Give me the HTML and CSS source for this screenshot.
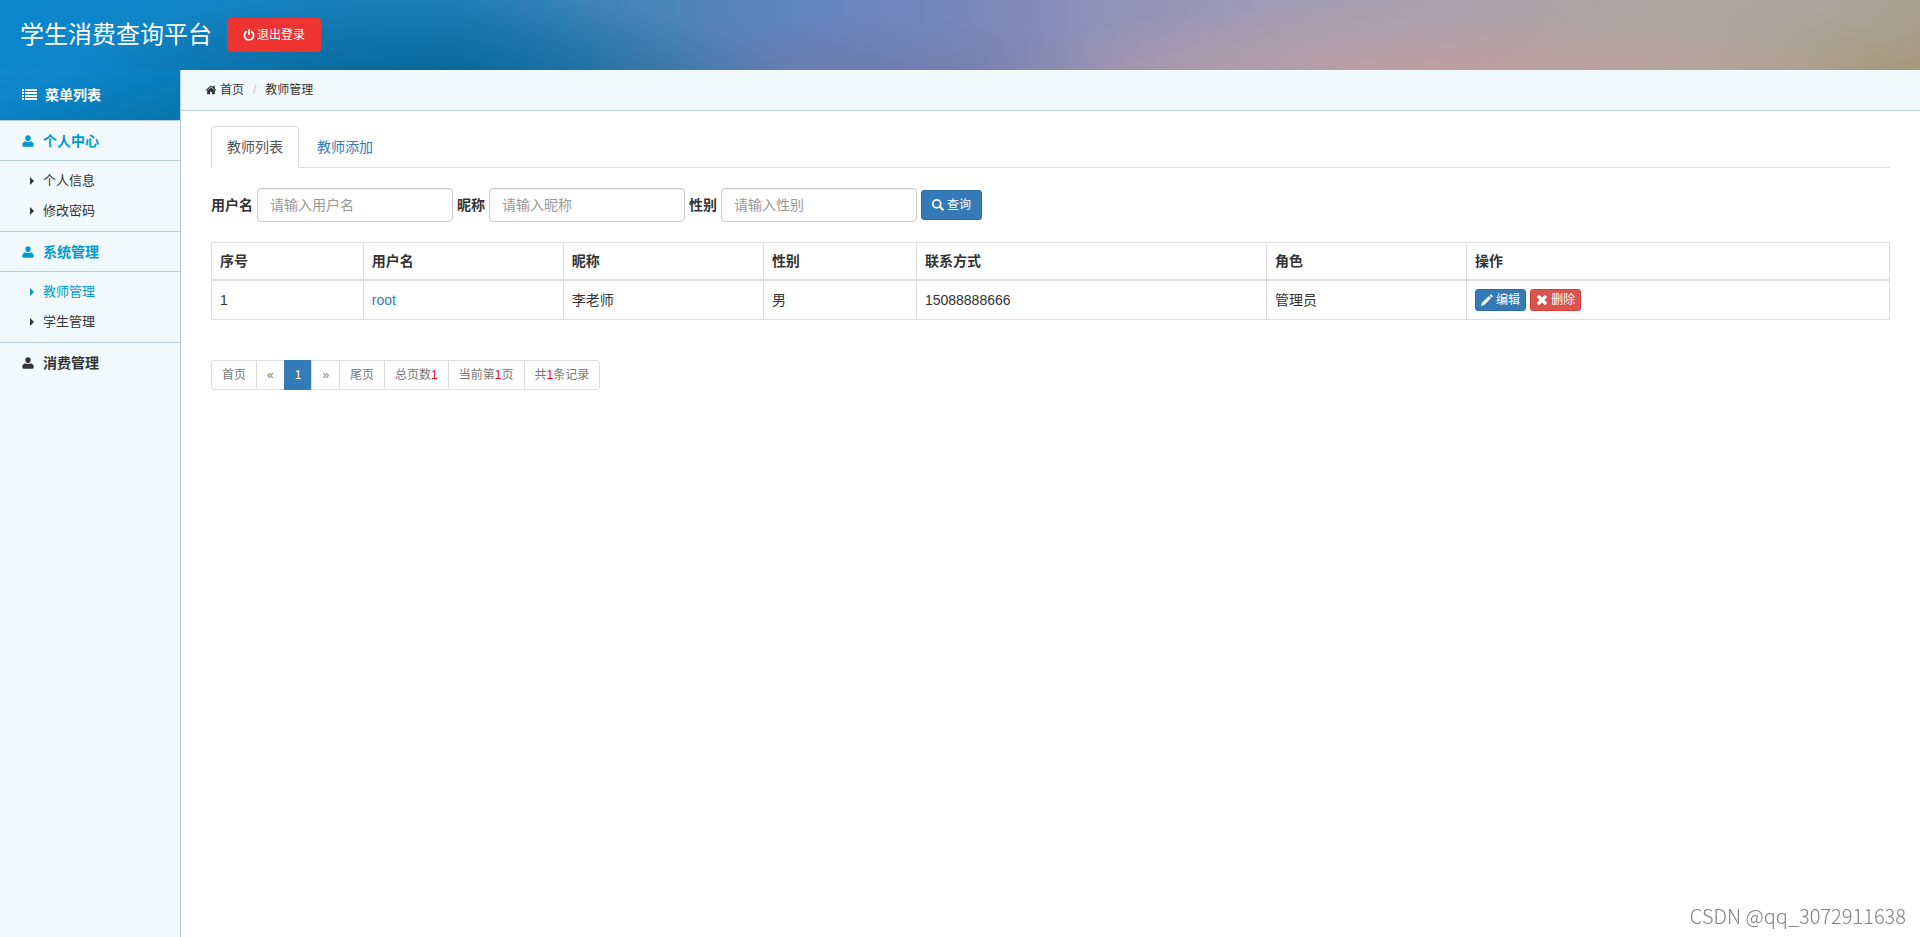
FILE: index.html
```html
<!DOCTYPE html>
<html lang="zh-CN">
<head>
<meta charset="utf-8">
<title>学生消费查询平台</title>
<link rel="stylesheet" href="styles.css">
</head>
<body>
<svg class="sprite" aria-hidden="true">
  <symbol id="i-user" viewBox="0 0 12 12"><path d="M6 .2a2.700 2.700 0 0 1 2.700 2.700C8.700 4.700 7.500 6.200 6 6.200S3.300 4.700 3.300 2.900A2.700 2.700 0 0 1 6 .2zM3.400 6.200Q6 8 8.600 6.200 11.500 6.800 11.700 9.800V10.600Q11.700 11.700 10.600 11.700H1.400Q.3 11.700.3 10.600V9.800Q.5 6.800 3.400 6.200z"/></symbol>
  <symbol id="i-home" viewBox="0 0 1792 1792"><path d="M1472 992v480q0 26-19 45t-45 19h-384v-384h-256v384h-384q-26 0-45-19t-19-45v-480q0-1 .5-3t.5-3l575-474 575 474q1 2 1 6zm223-69l-62 74q-8 9-21 11h-3q-13 0-21-7l-692-577-692 577q-12 8-24 7-13-2-21-11l-62-74q-8-10-7-23.500t11-21.500l719-599q32-26 76-26t76 26l244 204v-195q0-14 9-23t23-9h192q14 0 23 9t9 23v408l219 182q10 8 11 21.500t-7 23.500z"/></symbol>
  <symbol id="i-power" viewBox="100 0 1592 1692"><path d="M1664 896q0 156-61 298t-164 245-245 164-298 61-298-61-245-164-164-245-61-298q0-182 80.500-343t226.500-270q43-32 95.500-25t83.500 50q32 42 24.500 94.500t-49.500 84.500q-98 74-151.500 181t-53.500 228q0 104 40.500 198.500t109.500 163.500 163.500 109.500 198.500 40.500 198.500-40.500 163.500-109.500 109.500-163.500 40.500-198.500q0-121-53.500-228t-151.500-181q-42-32-49.500-84.500t24.500-94.500q31-43 84-50t95 25q146 109 226.500 270t80.500 343zm-640-768v640q0 52-38 90t-90 38-90-38-38-90v-640q0-52 38-90t90-38 90 38 38 90z"/></symbol>
  <symbol id="i-list" viewBox="0 0 15 12"><path d="M0 0h2v2H0zM3 0h12v2H3zM0 3h2v2H0zM3 3h12v2H3zM0 6h2v2H0zM3 6h12v2H3zM0 9h2v2H0zM3 9h12v2H3z"/></symbol>
  <symbol id="i-caret" viewBox="0 0 4 8"><path d="M0 0l4 4-4 4z"/></symbol>
  <symbol id="i-search" viewBox="0 0 12 12"><path fill-rule="evenodd" d="M4.800 0a4.800 4.800 0 1 0 2.600 8.800l2.700 2.800q.5.500 1 0l.6-.6q.5-.5 0-1L8.900 7.300A4.800 4.800 0 0 0 4.800 0zm0 1.700a3.100 3.100 0 1 1 0 6.200 3.100 3.100 0 0 1 0-6.200z"/></symbol>
  <symbol id="i-pencil" viewBox="0 0 12 12"><path d="M0 12l1-3.200L7.900 1.900l2.200 2.200L3.200 11zM8.600 1.200l.7-.7q.5-.5 1 0l1.200 1.200q.5.500 0 1l-.7.700z"/></symbol>
  <symbol id="i-remove" viewBox="0 0 12 12"><path d="M2.900.8L6 3.500 9.100.8l2.100 2.100L8.500 6l2.700 3.100-2.100 2.100L6 8.500l-3.100 2.700L.8 9.100 3.500 6 .8 2.900z"/></symbol>
</svg>
<header class="topbar">
  <h1 class="brand">学生消费查询平台</h1>
  <button class="logout" type="button"><svg class="icon"><use href="#i-power"/></svg>退出登录</button>
</header>
<div class="layout">
  <nav class="sidebar">
    <h2 class="menu-title"><svg class="icon-list"><use href="#i-list"/></svg>菜单列表</h2>
    <a class="group active" href="#"><svg class="icon-user"><use href="#i-user"/></svg>个人中心</a>
    <ul class="submenu">
      <li><a class="sub" href="#"><svg class="caret"><use href="#i-caret"/></svg>个人信息</a></li>
      <li><a class="sub" href="#"><svg class="caret"><use href="#i-caret"/></svg>修改密码</a></li>
    </ul>
    <a class="group active" href="#"><svg class="icon-user"><use href="#i-user"/></svg>系统管理</a>
    <ul class="submenu">
      <li><a class="sub active" href="#"><svg class="caret"><use href="#i-caret"/></svg>教师管理</a></li>
      <li><a class="sub" href="#"><svg class="caret"><use href="#i-caret"/></svg>学生管理</a></li>
    </ul>
    <a class="group last" href="#"><svg class="icon-user"><use href="#i-user"/></svg>消费管理</a>
  </nav>
  <main class="main">
    <div class="crumbs"><a class="crumb" href="#"><svg class="icon"><use href="#i-home"/></svg>首页</a><span class="sep">/</span><span>教师管理</span></div>
    <section class="content">
      <div class="tabs"><a class="tab current" href="#">教师列表</a><a class="tab" href="#">教师添加</a></div>
      <form class="filters">
        <label for="username">用户名</label><input class="field" id="username" type="text" placeholder="请输入用户名">
        <label for="nickname">昵称</label><input class="field" id="nickname" type="text" placeholder="请输入昵称">
        <label for="gender">性别</label><input class="field" id="gender" type="text" placeholder="请输入性别">
        <button class="btn" type="button"><svg class="icon"><use href="#i-search"/></svg>查询</button>
      </form>
      <table class="grid">
        <colgroup><col class="c-index"><col class="c-user"><col class="c-nick"><col class="c-gender"><col class="c-phone"><col class="c-role"><col></colgroup>
        <thead><tr><th>序号</th><th>用户名</th><th>昵称</th><th>性别</th><th>联系方式</th><th>角色</th><th>操作</th></tr></thead>
        <tbody><tr><td>1</td><td><a href="#">root</a></td><td>李老师</td><td>男</td><td>15088888666</td><td>管理员</td>
        <td><div class="actions"><button class="btn small" type="button"><svg class="icon"><use href="#i-pencil"/></svg>编辑</button><button class="btn small danger" type="button"><svg class="icon"><use href="#i-remove"/></svg>删除</button></div></td></tr></tbody>
      </table>
      <ul class="pages">
        <li><a href="#">首页</a></li><li><a href="#">«</a></li><li><a class="on" href="#">1</a></li><li><a href="#">»</a></li><li><a href="#">尾页</a></li><li><span>总页数<b>1</b></span></li><li><span>当前第<b>1</b>页</span></li><li><span>共<b>1</b>条记录</span></li>
      </ul>
    </section>
  </main>
</div>
<div class="watermark">CSDN @qq_3072911638</div>
</body>
</html>
```
FILE: styles.css
```css
* { box-sizing: border-box; }
body {
  margin: 0;
  min-height: 100vh;
  display: flex;
  flex-direction: column;
  font: 14px/20px "Liberation Sans", "Noto Sans CJK SC", sans-serif;
  color: #333;
  background: #fff;
}
a { color: #337ab7; text-decoration: none; }
ul { list-style: none; margin: 0; padding: 0; }
svg { fill: currentColor; flex: none; }
.sprite { display: none; }
.icon { width: 12px; height: 12px; }

.topbar {
  height: 70px;
  flex: none;
  display: flex;
  align-items: center;
  gap: 15px;
  padding: 0 20px;
  background:
    radial-gradient(ellipse 19% 130% at 22% 120%, rgba(0, 96, 145, 0.85), rgba(0, 96, 145, 0)),
    radial-gradient(ellipse 16% 100% at 44% 120%, rgba(112, 116, 160, 0.6), rgba(112, 116, 160, 0)),
    radial-gradient(ellipse 24% 110% at 74% 115%, rgba(200, 158, 156, 0.75), rgba(200, 158, 156, 0)),
    radial-gradient(ellipse 20% 110% at 94% 0%, rgba(170, 172, 170, 0.6), rgba(170, 172, 170, 0)),
    linear-gradient(to right, #0b87cc 0%, #1482c0 14%, #2080b6 24%, #4384b8 32%, #6085be 41%, #7886ba 50%, #9292b8 58%, #a39db4 68%, #aea3a9 80%, #b2a59c 89%, #aa9b84 96%, #a7967c 100%);
}
.brand { margin: 0; font-size: 24px; line-height: 34px; font-weight: 400; color: #fff; }
.logout {
  display: flex;
  align-items: center;
  justify-content: center;
  gap: 2px;
  height: 34px;
  padding: 0 16px;
  border: 0;
  border-radius: 4px;
  background: #e33;
  color: #fff;
  font: inherit;
  font-size: 12px;
}

.layout { flex: 1; display: flex; }
.sidebar { width: 181px; flex: none; background: #f2f9fd; border-right: 1px solid #b5cfd9; }
.menu-title {
  display: flex;
  align-items: center;
  gap: 8px;
  height: 51px;
  margin: 0;
  padding: 0 22px;
  border-bottom: 1px solid #b5cfd9;
  background: linear-gradient(160deg, #1488d0, #0a80c0 50%, #0874ab);
  color: #fff;
  font-size: 14px;
}
.icon-list { width: 15px; height: 12px; }
.group {
  display: flex;
  align-items: center;
  gap: 9px;
  height: 40px;
  padding: 0 22px;
  border-bottom: 1px solid #b5cfd9;
  font-weight: 700;
  color: #333;
}
.group.active, .sub.active { color: #09c; }
.group.last { border: 0; }
.icon-user { width: 12px; height: 12px; }
.submenu { padding: 5px 0; border-bottom: 1px solid #b5cfd9; }
.sub { display: flex; align-items: center; gap: 9px; height: 30px; padding-left: 30px; font-size: 13px; color: #333; }
.caret { width: 4px; height: 8px; }

.main { flex: 1; min-width: 0; }
.crumbs {
  display: flex;
  align-items: center;
  height: 41px;
  padding: 0 24px;
  border-bottom: 1px solid #b5cfd9;
  background: #f2f9fd;
  font-size: 12px;
}
.crumb { display: flex; align-items: center; gap: 3px; color: #333; }
.sep { padding: 0 9px; color: #ccc; }

.content { padding: 15px 30px; }
.tabs { display: flex; gap: 2px; border-bottom: 1px solid #ddd; }
.tab { padding: 10px 15px; border: 1px solid transparent; border-radius: 4px 4px 0 0; margin-bottom: -1px; }
.tab.current { color: #555; background: #fff; border-color: #ddd #ddd #fff; }

.filters { display: flex; align-items: center; gap: 4px; margin: 20px 0; }
.filters label { font-weight: 700; }
.field {
  width: 196px;
  height: 34px;
  padding: 6px 12px;
  border: 1px solid #ccc;
  border-radius: 4px;
  box-shadow: inset 0 1px 1px rgba(0, 0, 0, 0.075);
  font: inherit;
  color: #555;
}
.field::placeholder { color: #999; }
.btn {
  display: flex;
  align-items: center;
  gap: 3px;
  height: 30px;
  padding: 0 10px;
  border: 1px solid #2e6da4;
  border-radius: 3px;
  background: #337ab7;
  color: #fff;
  font: inherit;
  font-size: 12px;
}
.btn.small { height: 22px; padding: 0 5px; }
.btn.danger { background: #d9534f; border-color: #d43f3a; }

.grid { width: 100%; table-layout: fixed; border-collapse: collapse; }
.grid th, .grid td { padding: 8px; border: 1px solid #ddd; text-align: left; }
.grid th { border-bottom-width: 2px; }
.c-index { width: 9.05%; }
.c-user, .c-nick, .c-role { width: 11.92%; }
.c-gender { width: 9.12%; }
.c-phone { width: 20.87%; }
.actions { display: flex; gap: 4px; }

.pages { display: flex; margin-top: 40px; font-size: 12px; line-height: 18px; }
.pages li + li { margin-left: -1px; }
.pages a, .pages span { display: block; padding: 5px 10px; border: 1px solid #ddd; color: #777; }
.pages li:first-child a { border-radius: 3px 0 0 3px; }
.pages li:last-child span { border-radius: 0 3px 3px 0; }
.pages .on { background: #337ab7; border-color: #337ab7; color: #fff; }
.pages b { font-weight: 400; color: #f00; }

.watermark {
  position: fixed;
  right: 14px;
  bottom: 8px;
  font: 300 20px/26px "Noto Sans CJK SC", sans-serif;
  color: #808080;
}
```
